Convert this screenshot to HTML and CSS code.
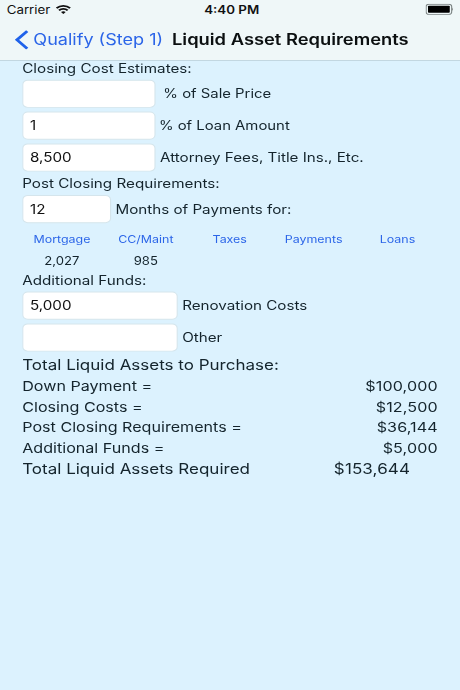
FILE: index.html
```html
<!DOCTYPE html>
<html lang="en">
<head>
    <meta charset="UTF-8">
    <meta name="viewport" content="width=device-width, initial-scale=1.0">
    <title>Liquid Asset Requirements</title>
    <link rel="stylesheet" href="styles.css">
</head>
<body>
    <div class="window">
    <div class="screen">
        <header>
            <div class="status-bar">
                <div class="carrier">
                    <span>Carrier</span>
                    <svg class="wifi" viewBox="0 0 14 10" fill="none" stroke="#111" stroke-width="1.9">
                        <path d="M0.9 3.7 A8.6 8.6 0 0 1 13.1 3.7"/>
                        <path d="M3.1 6 A5.5 5.5 0 0 1 10.9 6"/>
                        <path d="M7 10 L4.9 7.9 A3 3 0 0 1 9.1 7.9 Z" fill="#111" stroke="none"/>
                    </svg>
                </div>
                <span class="time">4:40 PM</span>
                <svg class="battery" viewBox="0 0 25 12">
                    <rect x="0.5" y="0.5" width="23" height="10.8" rx="2.5" fill="none" stroke="#7d8585"/>
                    <rect x="2.2" y="2.2" width="19.6" height="7.4" rx="0.8" fill="#000"/>
                    <path d="M24.2 4 Q25.4 5.8 24.2 7.6 Z" fill="#555"/>
                </svg>
            </div>
            <div class="nav-bar">
                <a class="back" href="#">
                    <svg class="chevron" viewBox="0 0 13 21" fill="none" stroke="#1f62ea" stroke-width="2.8">
                        <path d="M11.5 1.2 L2.3 10.5 L11.5 19.8"/>
                    </svg>
                    <span>Qualify (Step 1)</span>
                </a>
                <h1>Liquid Asset Requirements</h1>
            </div>
        </header>

        <form class="content">
            <h2>Closing Cost Estimates:</h2>
            <div class="row">
                <input type="text" id="salePercent" class="medium">
                <label for="salePercent" class="percent indent">% of Sale Price</label>
            </div>
            <div class="row">
                <input type="text" id="loanPercent" class="medium" value="1">
                <label for="loanPercent" class="percent">% of Loan Amount</label>
            </div>
            <div class="row">
                <input type="text" id="fees" class="medium" value="8,500">
                <label for="fees">Attorney Fees, Title Ins., Etc.</label>
            </div>

            <h2>Post Closing Requirements:</h2>
            <div class="row">
                <input type="text" id="months" class="short" value="12">
                <label for="months">Months of Payments for:</label>
            </div>
            <div class="payments">
                <a href="#">Mortgage</a>
                <a href="#">CC/Maint</a>
                <a href="#">Taxes</a>
                <a href="#">Payments</a>
                <a href="#">Loans</a>
                <span>2,027</span>
                <span>985</span>
            </div>

            <h2>Additional Funds:</h2>
            <div class="row">
                <input type="text" id="renovation" class="long" value="5,000">
                <label for="renovation">Renovation Costs</label>
            </div>
            <div class="row">
                <input type="text" id="other" class="long">
                <label for="other">Other</label>
            </div>

            <div class="totals">
                <div class="line big"><span>Total Liquid Assets to Purchase:</span></div>
                <div class="line"><span>Down Payment =</span><span class="amount">$100,000</span></div>
                <div class="line"><span>Closing Costs =</span><span class="amount">$12,500</span></div>
                <div class="line"><span>Post Closing Requirements =</span><span class="amount">$36,144</span></div>
                <div class="line"><span>Additional Funds =</span><span class="amount">$5,000</span></div>
                <div class="line big total"><span>Total Liquid Assets Required</span><span class="amount">$153,644</span></div>
            </div>
        </form>
    </div>
    </div>
</body>
</html>
```

FILE: styles.css
```css
body {
    margin: 0;
    background-color: #dcf2fe;
    font-family: Inter, "Liberation Sans", sans-serif;
    color: #14242c;
}
.window {
    width: 460px;
    height: 690px;
    overflow: hidden;
}
/* 414x736 phone screen stretched to fill the 460x690 window */
.screen {
    width: 414px;
    height: 736px;
    transform: scale(1.1111, 0.9375);
    transform-origin: 0 0;
}
header {
    height: 65px;
    background-color: #eff7f8;
    border-bottom: 1px solid #bfd5df;
    box-sizing: border-box;
}
.status-bar {
    height: 20px;
    display: grid;
    grid-template-columns: 1fr auto 1fr;
    align-items: center;
    padding: 0 5px 0 6px;
    font-size: 12px;
    color: #111;
}
.carrier {
    display: flex;
    align-items: center;
    gap: 5px;
}
.wifi {
    width: 14px;
    height: 10px;
}
.time {
    font-weight: 600;
    padding-left: 2px;
}
.battery {
    width: 25px;
    height: 12px;
    justify-self: end;
    margin-right: 1px;
}
.nav-bar {
    height: 44px;
    display: flex;
    align-items: center;
    padding-left: 13px;
}
.back {
    display: flex;
    align-items: center;
    gap: 4px;
    font-size: 16.25px;
    color: #2b65e8;
    text-decoration: none;
    white-space: nowrap;
}
.chevron {
    width: 13px;
    height: 21px;
}
h1 {
    margin: 0 0 0 8px;
    font-size: 16.5px;
    font-weight: 600;
    color: #0b0f10;
    white-space: nowrap;
}
.content {
    margin-top: -1px;
    padding: 0 20px;
}
h2 {
    margin: 0;
    height: 17px;
    line-height: 18px;
    font-size: 13.7px;
    font-weight: normal;
}
.row {
    display: flex;
    align-items: center;
    gap: 4px;
    margin: 4px 0;
    font-size: 13.65px;
}
input {
    height: 30px;
    padding: 0 6px;
    box-sizing: border-box;
    border: 1px solid #d5e5ec;
    border-radius: 5px;
    background-color: #fff;
    font: inherit;
    color: #111;
}
.short {
    width: 80px;
}
.medium {
    width: 120px;
}
.long {
    width: 140px;
}
.percent {
    font-size: 13.4px;
    margin-left: -1px;
}
.indent {
    padding-left: 4px;
}
.payments {
    display: grid;
    grid-template-columns: repeat(5, 75.5px);
    grid-template-rows: 26px 22px;
    align-items: center;
    justify-items: center;
    margin: 0 -2px;
    font-size: 11.8px;
}
.payments a {
    color: #2b65e8;
    text-decoration: none;
    font-size: 11.2px;
}
.totals {
    margin-top: 1px;
}
.line {
    display: flex;
    justify-content: space-between;
    height: 22.1px;
    line-height: 22px;
    font-size: 14.5px;
}
.amount {
    letter-spacing: 0.1px;
}
.big {
    font-size: 15.3px;
}
.total {
    padding-right: 25px;
    line-height: 23px;
}
```
